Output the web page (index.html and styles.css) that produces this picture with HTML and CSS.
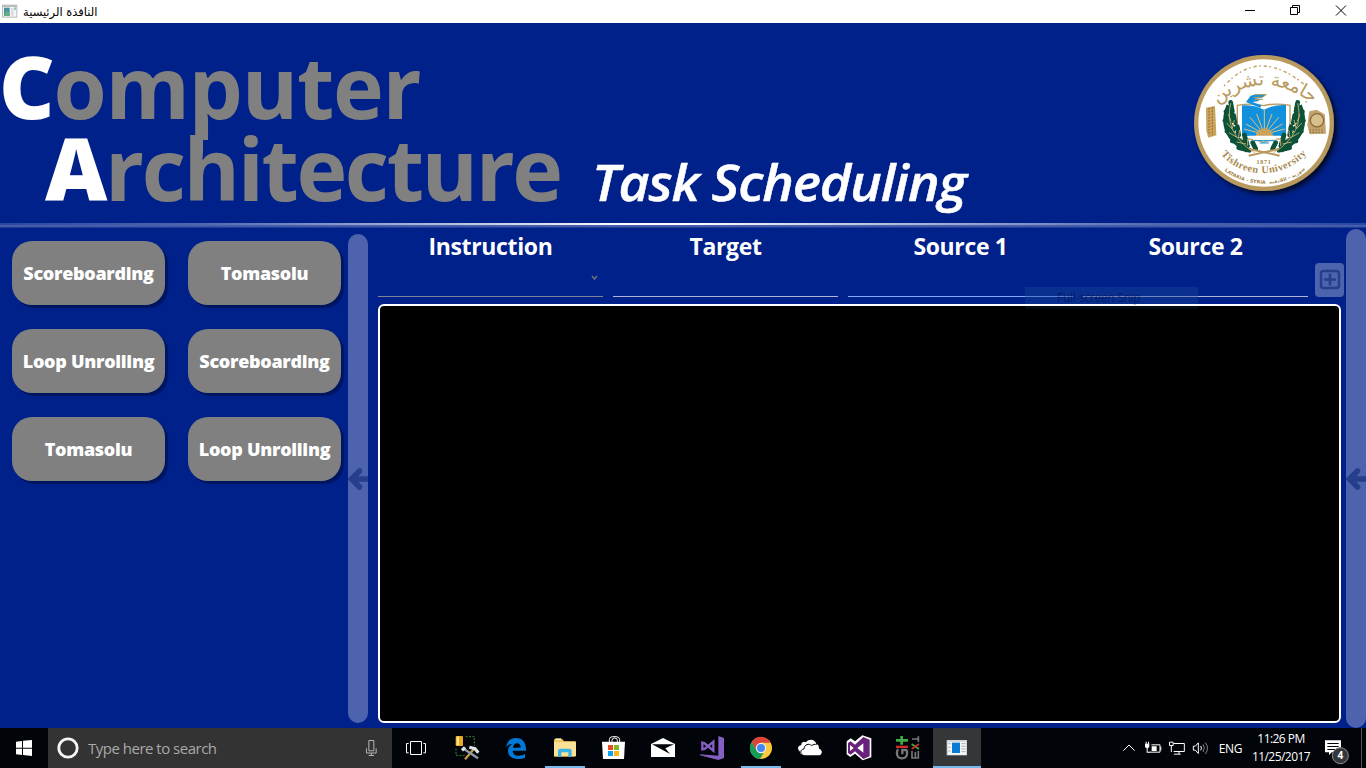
FILE: index.html
```html
<!DOCTYPE html>
<html lang="en">
<head>
<meta charset="utf-8">
<title>Computer Architecture</title>
<link rel="stylesheet" href="styles.css">
</head>
<body>
<div class="titlebar">
  <svg class="app-icon" width="16" height="15" viewBox="0 0 48 45"><path fill="#b9bcbc" d="M0 2h46v39H0z"/><path fill="#f4f6f6" d="M3 9h40v29H3z"/><path fill="#4b8fa0" d="M6 11h17v25H6z"/><path fill="#65b07c" d="M12 20l11 6v10H6z"/><path fill="#d8dcde" d="M27 12h8v23h-8z"/><path fill="#8fc3a6" d="M37 10h5v8h-5z"/></svg>
  <span class="window-name" dir="rtl" lang="ar">النافذة الرئيسية</span>
  <svg class="window-controls" width="166" height="23" viewBox="0 0 166 23" fill="none" stroke="#000" stroke-width="1"><path d="M45 10.500h10M90.500 7.500h7v7h-7zM92.500 7.500v-2h7v7h-2M136 5.500l10 10M146 5.500l-10 10"/></svg>
</div>
<header class="header">
  <h1 class="brand">
    <span class="line line-one"><b>C</b>omputer</span>
    <span class="line line-two"><b>A</b>rchitecture</span>
  </h1>
  <div class="subtitle">Task Scheduling</div>
  <svg class="seal" width="170" height="160" viewBox="0 0 510 480">
    <defs>
      <path id="arc-top" d="M100 200Q252 72 408 200"/>
      <path id="arc-name" d="M122 341C185 422 320 417 384 336"/>
      <path id="arc-city" d="M132 391C198 446 322 446 380 383"/>
      <filter id="seal-shadow" x="-20%" y="-20%" width="150%" height="150%"><feDropShadow dx="9" dy="9" stdDeviation="8" flood-color="#000" flood-opacity=".75"/></filter>
    </defs>
    <ellipse cx="252" cy="249" rx="210" ry="204" fill="#b89a5e" filter="url(#seal-shadow)"/>
    <ellipse cx="252" cy="249" rx="197" ry="191" fill="#fff"/>
    <text class="seal-arabic"><textPath href="#arc-top" startOffset="50%" text-anchor="middle">جامعة تشرين</textPath></text>
    <g fill="none" stroke="#c0a060" stroke-width="4" stroke-dasharray="5 9 10 7"><path d="M132 138Q190 74 252 78T378 138"/></g>
    <path fill="#c9a35c" d="M78 203l27-5 4 88-24 7-6-20z"/><path fill="none" stroke="#8a6b35" stroke-width="3" stroke-dasharray="5 4" d="M87 204v82M97 202v84"/>
    <path fill="#c2a36b" d="M388 214l22-5 24 14 4 58-49 2-7-28z"/><circle cx="411" cy="241" r="20" fill="#d9bf8c" stroke="#8a6b3a" stroke-width="4"/><path stroke="#8f7340" stroke-width="3" stroke-dasharray="5 4" d="M388 270h45M388 277h45"/>
    <path fill="#fff" stroke="#b89a5e" stroke-width="4" d="M172 196q45-8 79 1q36-9 79-1v102q-45-5-79 9q-34-14-79-9z"/>
    <path fill="#1390dc" d="M186 196q35-2 66 13q30-16 66-14v93H186z"/>
    <path fill="#1390dc" d="M198 186l14-19 15-4h32l-12 9-22 4h19l-11 8-16 2 27 10-3 8z"/><path stroke="#b89a5e" stroke-width="3" fill="none" d="M224 164h35l-12 8h-26M222 178h27"/>
    <path stroke="#ddc27d" stroke-width="3" d="M253 283v-74M253 283l-23-61M253 283l23-61M253 283l-43-51M253 283l43-51M253 283l-55-31M253 283l55-31M253 283l-61-16M253 283l61-16"/>
    <path fill="#c9a35c" d="M227 288a26 23 0 0 1 52 0z"/><path stroke="#fff" stroke-width="5" d="M206 290h94M218 297h70"/><path stroke="#1390dc" stroke-width="3" d="M222 302h62M239 309h28"/>
    <g fill="none" stroke="#0c5239">
      <path stroke-width="24" d="M151 198Q118 280 205 327M354 198Q387 280 300 327"/>
      <path stroke-width="14" stroke-linecap="round" d="M152 187l5 27M138 215l18 26M135 242l26 25M141 274l30 17M157 303l31 4M176 323l32 8M161 226l4 22M172 260l4 25M193 285l8 27M218 308l9 18M353 187l-5 27M367 215l-18 26M370 242l-26 25M364 274l-30 17M348 303l-31 4M329 323l-32 8M344 226l-4 22M333 260l-4 25M312 285l-8 27M287 308l-9 18"/>
    </g>
    <g fill="none" stroke="#d6ba78" stroke-width="2.500"><path d="M152 190Q130 280 225 339M353 190Q375 280 280 339M145 222l8 22M140 249l16 18M147 278l24 14M170 306l28 6M360 222l-8 22M365 249l-16 18M358 278l-24 14M335 306l-28 6M163 240l-6 24M179 270l-4 24M203 296l0 22M342 240l6 24M326 270l4 24M302 296l0 22"/></g>
    <path fill="none" stroke="#b89a5e" stroke-width="6" d="M206 347l91-20M299 347l-91-20"/>
    <text class="seal-year" x="251" y="371" text-anchor="middle" textLength="43">1871</text>
    <text class="seal-name"><textPath href="#arc-name" startOffset="2" textLength="290">Tishreen University</textPath></text>
    <text class="seal-city"><textPath href="#arc-city" startOffset="2" textLength="132">LATAKIA - SYRIA</textPath></text>
    <text class="seal-city"><textPath href="#arc-city" startOffset="145" textLength="118">سورية - اللاذقية</textPath></text>
  </svg>
</header>
<div class="divider"></div>
<main class="main">
  <nav class="methods">
    <button>Scoreboarding</button><button>Tomasolu</button>
    <button>Loop Unrolling</button><button>Scoreboarding</button>
    <button>Tomasolu</button><button>Loop Unrolling</button>
  </nav>
  <div class="rail rail-left"><svg width="20" height="24" viewBox="0 0 20 24"><path d="M22 12H4M11.500 4L3.500 12l8 8"/></svg></div>
  <section class="workspace">
    <div class="fields">
      <div class="field select"><label>Instruction</label><svg width="7" height="6" viewBox="0 0 7 6"><path d="M1 1l2.500 3L6 1"/></svg></div>
      <div class="field"><label>Target</label></div>
      <div class="field blue"><label>Source 1</label></div>
      <div class="field"><label>Source 2</label></div>
      <button class="add"><svg width="22" height="22" viewBox="0 0 22 22"><rect x="2" y="2" width="18" height="17" rx="2.500"/><path d="M11 4.500v12M5 10.500h12"/></svg></button>
    </div>
    <div class="board"></div>
    <div class="snip">Full-screen Snip</div>
  </section>
  <div class="rail rail-right"><svg width="20" height="24" viewBox="0 0 20 24"><path d="M22 12H4M11.500 4L3.500 12l8 8"/></svg></div>
</main>
<footer class="taskbar">
  <svg class="start" width="48" height="40" viewBox="0 84 144 120" fill="#fff"><path d="M48 125l18-2v20H48zM69 122l27-2v23H69zM48 146h18v19l-18-2zM69 146h27v22l-27-3z"/></svg>
  <div class="search">
    <svg width="22" height="22" viewBox="0 0 22 22"><circle cx="11" cy="11" r="9.200" fill="none" stroke="#f5f5f5" stroke-width="2.800"/></svg>
    <span>Type here to search</span>
    <svg class="mic" width="14" height="18" viewBox="0 0 42 54" fill="none" stroke="#b5b5b5" stroke-width="3"><path d="M14.500 4.500h15v31h-15zM7.500 28v14h29V28M22 42v7M14 49.500h16"/></svg>
  </div>
  <div class="apps">
    <svg class="task-view" viewBox="-12 12 144 120" fill="none" stroke="#fff" stroke-width="3"><path d="M43.500 52.500h33v39h-33zM38 58.500h-6.500v28H38M82 58.500h6.500v28H82"/></svg>
    <svg viewBox="141 12 144 120"><path fill="none" stroke="#39852e" stroke-width="3" stroke-dasharray="6 4" d="M209 38h26v27M180 74v20h26"/><rect x="179" y="36" width="22" height="30" rx="3" fill="#e9a928"/><path fill="#ffe58c" d="M182 38h7v25h-7z"/><path stroke="#c99b45" stroke-width="7" d="M233 76l-26 30"/><path stroke="#8f9ba6" stroke-width="7" d="M203 74l43 29"/><path stroke="#dfe6ea" stroke-width="9" fill="none" d="M220 70l17 4 10 12M198 79l9-9"/></svg>
    <svg viewBox="288 12 144 120"><path fill="#0078d7" d="M330 70C334 49 345 42 360 42c20 0 30 14 30 34v4h-40c1 11 9 15 18 15 7 0 13-2 19-5v11c-7 3-14 4-22 4-19 0-29-11-29-24 0-11 6-18 14-22-9 1-16 5-20 11zM351 71h23c0-9-4-13-11-13s-11 6-12 13z"/></svg>
    <svg class="open" viewBox="435 12 144 120"><path fill="#f5b93a" d="M474 46h26l4 6h34v46h-64z"/><path fill="#fff1b8" d="M478 43h18v6h-18z"/><path fill="#fbe195" d="M474 53h66v43h-66z"/><path fill="#3bb3e5" d="M486 99V80q0-6 6-6h28q7 0 7 6v19h-10V85h-21v14z"/></svg>
    <svg viewBox="582 12 144 120"><path fill="none" stroke="#fff" stroke-width="3" d="M640 55v-8q0-9 10-9h10q11 0 11 9v8M648 55v-6q0-7 8-7t8 7v6"/><path fill="#fff" d="M618 53h69l-3 52h-63z"/><path fill="#e84c23" d="M636 63h15v15h-15z"/><path fill="#7fba27" d="M654 63h15v15h-15z"/><path fill="#08a4ef" d="M636 81h15v15h-15z"/><path fill="#fcb912" d="M654 81h15v15h-15z"/></svg>
    <svg viewBox="729 12 144 120"><path fill="#fff" d="M765 60l36-18 36 18v39h-72z"/><path fill="#010409" d="M768 61h66l-26 12 14 17-26-14z"/></svg>
    <svg viewBox="-6 12 144 120"><path fill="#865fc5" d="M85 36l17 6v60l-17 6-55-14v-3l55 4z"/><path fill="none" stroke="#865fc5" stroke-width="7" d="M37 56v20l7-1 26-22v27L44 58z"/></svg>
    <svg class="open" viewBox="141 12 144 120"><circle cx="213" cy="72" r="33" fill="#fbc93d"/><path fill="#dc4437" d="M185 54A33 33 0 0 1 242 56H213L199 80z"/><path fill="#169c59" d="M185 54l15 26 20 8-10 17A33 33 0 0 1 185 54z"/><circle cx="213" cy="72" r="15.500" fill="#f1f1f1"/><circle cx="213" cy="72" r="12" fill="#4587f2"/></svg>
    <svg viewBox="288 12 144 120"><path fill="#fff" d="M329 81c-7-4-7-16 5-18-1-8 9-12 14-8 8-12 29-9 31 6 7 0 8 8 8 13 12 3 11 20-2 20h-39c-11 0-17-4-17-13z"/><path fill="none" stroke="#010409" stroke-width="3" d="M339 94c-10-4-9-18 3-19 1-14 15-18 23-10 4-4 11-5 15-3"/></svg>
    <svg viewBox="435 12 144 120"><path fill="#fff" d="M470 52l12-9 13 9 22-18 27 9v57l-26 9-23-20-14 10-11-8z"/><path fill="#68217a" d="M520 39l19 8v50l-19 8-25-23-13 10-8-5V57l8-5 13 10z"/><path fill="#fff" d="M480 63l11 9-11 9zM502 72l18-14v28z"/></svg>
    <svg viewBox="582 12 144 120"><path fill="#3dac44" d="M618 45h13v-9h8v9h15v8h-15v9h-8v-9h-13z"/><path fill="#d12b28" d="M618 65h36v7h-36z"/><path fill="none" stroke="#777" stroke-width="7" d="M625 76q-5 3-4 14 1 13 15 13t15-13q1-11-2-12h-12v13"/><g fill="none" stroke="#777" stroke-width="5"><path d="M685 37v16M666 45h20M666 81v21h19V81M676 84v16"/></g><path stroke="#3dac44" stroke-width="5" d="M665 60l22 15"/><path stroke="#d12b28" stroke-width="5" d="M687 60l-22 15"/></svg>
    <svg class="open active" viewBox="729 12 144 120"><path fill="#d4d7da" d="M770 48h61v46h-61z"/><path fill="#f8f8f8" d="M774 54h54v38h-54z"/><path fill="#0a7bd2" d="M786 56h24v31h-24z"/><path stroke="#a9adb0" stroke-width="3" d="M814 59h13M814 67h13M814 75h13M814 83h13M775 59h7M775 70h7M775 81h7"/></svg>
  </div>
  <div class="tray">
    <svg width="92" height="40" viewBox="60 84 276 120" fill="none" stroke="#fff" stroke-width="3"><path d="M70 152l17-17 17 17"/><path d="M154 134.500h26v22h-31M182.500 140v11"/><path fill="#fff" stroke="none" d="M155 139h15v14h-15zM135 131h13v8q0 5-5 6v10h8v3h-11v-13q-5-1-5-6zM137 125h3v7h-3zM144 125h3v7h-3z"/><path d="M221 130.500h32v24h-32M208.500 126.500h11v10h-11zM214 137v19M237 155v7M222 162.500h20"/><path d="M280 138.500h6l9-10v32l-9-10h-6z"/><path d="M302 138q5 6 0 13"/><path stroke="#858585" d="M309 133q8 11 0 23M316 128q13 16 0 34"/></svg>
    <span class="lang">ENG</span>
    <div class="clock"><span>11:26 PM</span><span>11/25/2017</span></div>
    <svg class="notices" width="46" height="40" viewBox="660 84 138 120"><path fill="#fff" d="M675 121h48v36h-28l-8 9v-9h-12z"/><path stroke="#010409" stroke-width="3" d="M682 130.500h34M682 139.500h34M682 148.500h23"/><circle cx="721" cy="167" r="24" fill="#343638" stroke="#8c8f91" stroke-width="3"/><text x="721" y="178" text-anchor="middle">4</text><path stroke="#555" stroke-width="3" d="M784.500 84v120"/></svg>
  </div>
</footer>
</body>
</html>
```
FILE: styles.css
```css
* { box-sizing: border-box; }
body { margin: 0; width: 1366px; height: 768px; overflow: hidden; display: flex; flex-direction: column; background: #00218a; color: #fff; font-family: "Open Sans", "Noto Sans", sans-serif; }
svg { display: block; flex: none; }
button { border: 0; padding: 0; font: inherit; color: inherit; }

.titlebar { height: 23px; flex: none; display: flex; align-items: center; background: #fff; color: #000; padding-left: 2px; }
.window-name { margin-left: 5px; font: 11.500px/20px "DejaVu Sans", sans-serif; white-space: nowrap; }
.window-controls { margin-left: auto; }

.header { height: 200px; flex: none; display: flex; align-items: flex-start; }
.brand { margin: 0; width: 592px; padding-top: 22px; flex: none; font-size: 86px; font-weight: 700; color: #808080; }
.brand b { color: #fff; }
.line { display: block; height: 82px; line-height: 82px; white-space: nowrap; }
.line-one { letter-spacing: -1.300px; margin-left: -1px; }
.line-two { padding-left: 45px; letter-spacing: -2.400px; }
.subtitle { padding-top: 125px; font-size: 50px; line-height: 68px; font-weight: 600; font-style: italic; letter-spacing: -1px; white-space: nowrap; transform: scaleX(1.07); transform-origin: 0 50%; -webkit-text-stroke: .5px #fff; }
.seal { margin: 17px 16px 0 auto; overflow: visible; }
.seal-arabic { font: 400 56px "DejaVu Sans", sans-serif; fill: #b89a5e; }
.seal-year { font: 700 18px "Liberation Serif", serif; fill: #a08245; }
.seal-name { font: 700 31px "Liberation Serif", serif; fill: #a98c50; }
.seal-city { font: 700 14px "DejaVu Sans", sans-serif; fill: #9b7d43; }

.divider { height: 5px; flex: none; background: linear-gradient(#4a60ad, #4a60ad 40%, #12308f) 0 2px / 100% 3px no-repeat, linear-gradient(90deg, #2a47a0 0, #5068b2 15%, #fff 46%, #fff 50%, #5068b2 85%, #2a47a0 100%); }

.main { height: 500px; flex: none; display: flex; align-items: flex-start; }
.methods { width: 348px; padding: 13px 0 0 12px; display: grid; grid-template-columns: 152px 152px; gap: 24px; }
.methods button { height: 64px; width: 153px; border-radius: 20px; background: #808080; box-shadow: 3px 3px 1px #001560; font-size: 18px; font-weight: 800; letter-spacing: -.3px; white-space: nowrap; }
.rail { width: 20px; flex: none; border-radius: 10px; background: #4d63ae; }
.rail svg { fill: none; stroke: #253f8d; stroke-width: 5.500; stroke-linecap: round; }
.rail-left { height: 489px; margin-top: 6px; padding-top: 233px; }
.rail-right { height: 499px; margin-top: 1px; padding-top: 238px; }
.workspace { position: relative; width: 978px; height: 500px; padding-left: 10px; }
.fields { display: flex; gap: 10px; height: 76px; }
.field { width: 225px; height: 69px; border-bottom: 1px solid #b0b4d8; text-align: center; }
.field label { display: block; padding-top: 2px; font-size: 23px; line-height: 32px; font-weight: 700; letter-spacing: -.35px; }
.field.select { border-color: #808498; }
.field.blue { border-color: #84a9ff; }
.field svg { margin: 13px 5px 0 auto; fill: none; stroke: #6c7078; stroke-width: 1.500; }
.add { width: 29px; height: 34px; margin: 35px 0 0 -3px; border-radius: 4px; background: #4d63ae; display: grid; place-items: center; flex: none; }
.add svg { fill: none; stroke: #253f8d; stroke-width: 2.500; }
.board { width: 963px; height: 419px; border: 2px solid #fff; border-radius: 6px; background: #000; }
.snip { position: absolute; left: 657px; top: 59px; width: 173px; height: 22px; padding-left: 32px; background: linear-gradient(rgba(24, 70, 150, .4) 17px, transparent 17px, transparent 19px, rgba(24, 40, 60, .3) 19px); color: rgba(0, 5, 60, .5); font-size: 12px; line-height: 22px; letter-spacing: -.3px; }

.taskbar { height: 40px; flex: none; display: flex; background: #010409; }
.search { width: 344px; flex: none; display: flex; align-items: center; padding-left: 9px; background: #333; color: #a9a9a9; font-size: 15px; }
.search span { margin-left: 9px; letter-spacing: -.5px; white-space: nowrap; }
.search .mic { margin: 0 14px 0 auto; }
.apps { display: flex; gap: 1px; }
.apps svg { width: 48px; height: 40px; }
.apps .task-view { margin-right: 2px; }
.apps .open { background: linear-gradient(#76b9ed, #76b9ed) 50% 100% / 40px 2px no-repeat; }
.apps .active { background-color: #343638; background-size: 48px 2px; }
.tray { margin-left: auto; display: flex; align-items: center; font-size: 12px; }
.lang { width: 37px; text-align: center; letter-spacing: -.3px; }
.clock { width: 70px; margin: 0 4px 0 -3px; display: flex; flex-direction: column; align-items: center; line-height: 18px; letter-spacing: -.55px; }
.notices text { font: 700 30px "Open Sans", sans-serif; fill: #fff; }
```
